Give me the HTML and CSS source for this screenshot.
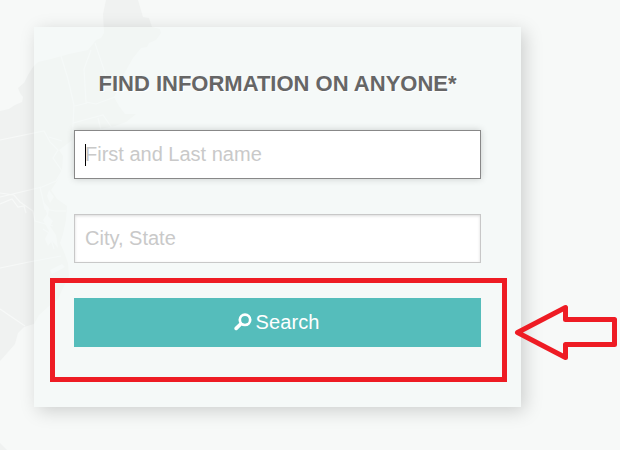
FILE: index.html
```html
<!DOCTYPE html>
<html lang="en">
<head>
<meta charset="utf-8">
<title>Find Information on Anyone</title>
<link rel="stylesheet" href="styles.css">
</head>
<body>
<svg class="map" width="620" height="450" viewBox="0 0 620 450" aria-hidden="true">
  <path class="land" d="M0 111L9 109L15 105L22 102L23 97L20 93L18 88L24 83L28 75L33 67L38 62L51 59L69 54L88 50L93 44L96 40L101 38L104 33L103 14L106 0H138L143 17L149 18L152 27L160 29L161 33L156 40L149 43L147 47L141 48L137 53L133 58L129 65L124 74L119 80L117 91L114 97L119 106L125 114L136 114L126 122L115 126L100 129L87 133L75 138L67 144L59 150L63 156L62 171L57 181L51 190L57 199L67 206L66 220L63 234L60 243L64 252L68 263L69 276L62 290L58 299L49 306L39 315L34 324L24 327L18 333L15 344L8 352L0 361Z"/>
  <path class="water" d="M49 190L54 197L50 203L47 196ZM43 201L49 208L48 216L53 221L50 226L56 235L58 248L52 241L48 246L45 239L49 231L43 220L47 214ZM50 270L62 264L65 267L52 274Z"/>
  <path class="line" d="M0 140L44 131L50 142L58 150L53 158L62 171L56 181L42 187L0 197M49 137L62 141M61 56L68 79L74 105L72 146L104 145L117 138M91 50L84 69L86 102L96 104L123 94M95 43L106 76M75 106L87 103M73 123L103 115L112 128M98 118L101 130M0 193L14 195L20 202L33 211L35 221L53 226M0 204L12 199L18 207L24 206L26 213M40 187L45 209L55 211L66 211M0 268L29 262L61 256M0 309L25 326M43 229L49 233L54 249"/>
  <path class="land" d="M0 443L7 450H0Z"/>
</svg>
<main class="page">
  <form class="card">
    <h1 class="title">FIND INFORMATION ON ANYONE*</h1>
    <div class="field field-active"><i class="caret"></i><span>First and Last name</span></div>
    <div class="field"><span>City, State</span></div>
    <button class="search" type="button">
      <svg class="glass" width="18" height="18" viewBox="0 0 18 18" aria-hidden="true">
        <circle cx="11" cy="6.8" r="5.2"/>
        <path d="M6.7 11L2.2 15.4"/>
      </svg>
      <span>Search</span>
    </button>
  </form>
</main>
<div class="highlight"></div>
<svg class="arrow" width="620" height="450" viewBox="0 0 620 450" aria-hidden="true">
  <path d="M517.5 332.5L565.5 307.5V319.5H614.5V344.5H565.5V357.5Z"/>
</svg>
</body>
</html>
```
FILE: styles.css
```css
* { box-sizing: border-box; }
body {
  margin: 0;
  width: 620px;
  height: 450px;
  overflow: hidden;
  background: #f7f9f8;
  font-family: "Liberation Sans", Arial, sans-serif;
}
.map, .arrow { position: absolute; top: 0; left: 0; }
.land { fill: #f0f2f1; }
.water { fill: #f7f9f8; }
.line { fill: none; stroke: #f7f9f8; stroke-width: 1.2; }
.page { position: relative; padding: 27px 0 0 34px; }
.card {
  display: flex;
  flex-direction: column;
  gap: 35px;
  width: 487px;
  height: 380px;
  padding: 40px;
  background: rgba(243, 249, 247, 0.5);
  box-shadow: 4px 4px 17px rgba(0, 0, 0, 0.17);
}
.title {
  height: 28px;
  margin: 0;
  font-size: 22px;
  line-height: 34px;
  font-weight: bold;
  text-align: center;
  white-space: nowrap;
  color: #666;
  text-shadow: 1px 1px 0 #fff;
}
.field {
  display: flex;
  align-items: center;
  height: 49px;
  padding: 0 10px 1px;
  border: 1px solid #c8c8c8;
  background: #fff;
  box-shadow: inset 0 1px 3px rgba(0, 0, 0, 0.15);
  font-size: 20px;
  color: #c9c9c9;
}
.field-active {
  border-color: #888;
  box-shadow: 0 0 7px rgba(0, 0, 0, 0.18);
}
.caret { width: 1px; height: 22px; margin: 2px -1px 0 0; background: #000; }
.search {
  display: flex;
  align-items: center;
  justify-content: center;
  gap: 4px;
  height: 49px;
  padding: 0 2px 1px 0;
  border: 0;
  background: #55bdbb;
  color: #fff;
  font: 20px "Liberation Sans", Arial, sans-serif;
  letter-spacing: 0.1px;
}
.glass { fill: none; stroke: #fff; stroke-width: 2.7; }
.glass path { stroke-width: 3.6; stroke-linecap: round; }
.highlight {
  position: absolute;
  left: 50px;
  top: 278px;
  width: 457px;
  height: 104px;
  border: 5px solid #ee1c24;
}
.arrow path { fill: none; stroke: #ee1c24; stroke-width: 5; stroke-linejoin: round; }
```
